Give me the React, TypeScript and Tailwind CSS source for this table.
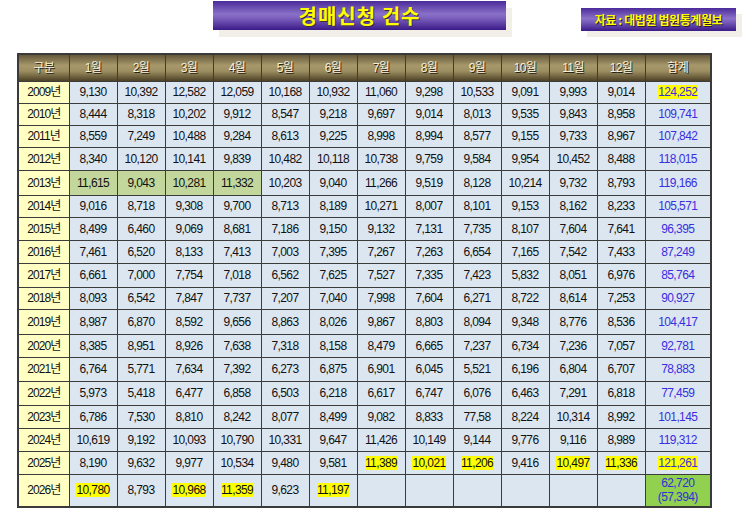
import React from 'react';

type Row = {
  year: string;
  h: string;
  vals: (string | null)[];
  total: string;
  hl?: number[];
  green?: number[];
  totalHl?: boolean;
};

const rows: Row[] = [
  { year: '2009', h: 'h-[22px]', vals: ['9,130', '10,392', '12,582', '12,059', '10,168', '10,932', '11,060', '9,298', '10,533', '9,091', '9,993', '9,014'], total: '124,252', totalHl: true },
  { year: '2010', h: 'h-[22px]', vals: ['8,444', '8,318', '10,202', '9,912', '8,547', '9,218', '9,697', '9,014', '8,013', '9,535', '9,843', '8,958'], total: '109,741' },
  { year: '2011', h: 'h-[22px]', vals: ['8,559', '7,249', '10,488', '9,284', '8,613', '9,225', '8,998', '8,994', '8,577', '9,155', '9,733', '8,967'], total: '107,842' },
  { year: '2012', h: 'h-[23px]', vals: ['8,340', '10,120', '10,141', '9,839', '10,482', '10,118', '10,738', '9,759', '9,584', '9,954', '10,452', '8,488'], total: '118,015' },
  { year: '2013', h: 'h-[25px]', vals: ['11,615', '9,043', '10,281', '11,332', '10,203', '9,040', '11,266', '9,519', '8,128', '10,214', '9,732', '8,793'], total: '119,166', green: [0, 1, 2, 3] },
  { year: '2014', h: 'h-[22px]', vals: ['9,016', '8,718', '9,308', '9,700', '8,713', '8,189', '10,271', '8,007', '8,101', '9,153', '8,162', '8,233'], total: '105,571' },
  { year: '2015', h: 'h-[23px]', vals: ['8,499', '6,460', '9,069', '8,681', '7,186', '9,150', '9,132', '7,131', '7,735', '8,107', '7,604', '7,641'], total: '96,395' },
  { year: '2016', h: 'h-[23px]', vals: ['7,461', '6,520', '8,133', '7,413', '7,003', '7,395', '7,267', '7,263', '6,654', '7,165', '7,542', '7,433'], total: '87,249' },
  { year: '2017', h: 'h-[24px]', vals: ['6,661', '7,000', '7,754', '7,018', '6,562', '7,625', '7,527', '7,335', '7,423', '5,832', '8,051', '6,976'], total: '85,764' },
  { year: '2018', h: 'h-[22px]', vals: ['8,093', '6,542', '7,847', '7,737', '7,207', '7,040', '7,998', '7,604', '6,271', '8,722', '8,614', '7,253'], total: '90,927' },
  { year: '2019', h: 'h-[25px]', vals: ['8,987', '6,870', '8,592', '9,656', '8,863', '8,026', '9,867', '8,803', '8,094', '9,348', '8,776', '8,536'], total: '104,417' },
  { year: '2020', h: 'h-[23px]', vals: ['8,385', '8,951', '8,926', '7,638', '7,318', '8,158', '8,479', '6,665', '7,237', '6,734', '7,236', '7,057'], total: '92,781' },
  { year: '2021', h: 'h-[24px]', vals: ['6,764', '5,771', '7,634', '7,392', '6,273', '6,875', '6,901', '6,045', '5,521', '6,196', '6,804', '6,707'], total: '78,883' },
  { year: '2022', h: 'h-[24px]', vals: ['5,973', '5,418', '6,477', '6,858', '6,503', '6,218', '6,617', '6,747', '6,076', '6,463', '7,291', '6,818'], total: '77,459' },
  { year: '2023', h: 'h-[23px]', vals: ['6,786', '7,530', '8,810', '8,242', '8,077', '8,499', '9,082', '8,833', '77,58', '8,224', '10,314', '8,992'], total: '101,145' },
  { year: '2024', h: 'h-[23px]', vals: ['10,619', '9,192', '10,093', '10,790', '10,331', '9,647', '11,426', '10,149', '9,144', '9,776', '9,116', '8,989'], total: '119,312' },
  { year: '2025', h: 'h-[23px]', vals: ['8,190', '9,632', '9,977', '10,534', '9,480', '9,581', '11,389', '10,021', '11,206', '9,416', '10,497', '11,336'], total: '121,261', hl: [6, 7, 8, 10, 11], totalHl: true },
  { year: '2026', h: 'h-[33px]', vals: ['10,780', '8,793', '10,968', '11,359', '9,623', '11,197', null, null, null, null, null, null], total: '', hl: [0, 2, 3, 5] },
];

const months = ['1월', '2월', '3월', '4월', '5월', '6월', '7월', '8월', '9월', '10월', '11월', '12월'];

const headCls =
  'border border-[#3c3c3c] bg-[linear-gradient(to_bottom,#65583a,#a6986a_40%,#9c8e60_62%,#4c4026)] text-[#f6f0dc] font-normal [text-shadow:1px_1px_0_#2a2415]';
const cellCls = 'border border-[#3c3c3c] text-center p-0';

export default function App() {
  return (
    <div
      className="w-[743px] h-[516px] bg-white overflow-hidden"
      style={{ fontFamily: '"Liberation Sans", "Noto Sans CJK KR", sans-serif' }}
    >
      {/* Title row */}
      <div className="flex items-start">
        <div className="ml-[213px] mt-[1px] w-[293px] h-[29px] flex items-center justify-center bg-[linear-gradient(to_bottom,#4a2a9a,#8a70c8_45%,#7a5ebc_60%,#3a1a88)] shadow-[6px_7px_0_#f1efe7]">
          <span
            className="text-[20px] font-bold text-[#ffff00] tracking-[1px] [text-shadow:1px_1px_0_#3a2a40]"
            style={{ fontFamily: '"Noto Sans CJK KR", sans-serif' }}
          >
            경매신청 건수
          </span>
        </div>
        <div className="ml-[75px] mt-[8px] w-[155px] h-[23px] flex items-center justify-center bg-[linear-gradient(to_bottom,#4a2a9a,#8a70c8_45%,#7a5ebc_60%,#3a1a88)] shadow-[6px_6px_0_#f1efe7]">
          <span
            className="text-[12px] font-bold text-[#ffff00] tracking-[-0.4px] [text-shadow:1px_1px_0_#2a1a40]"
            style={{ fontFamily: '"Noto Sans CJK KR", sans-serif' }}
          >
            자료 : 대법원 법원통계월보
          </span>
        </div>
      </div>

      {/* Table */}
      <table className="ml-[17px] mt-[22px] table-fixed border-collapse border-2 border-[#3a3a3a] text-[12px] tracking-[-0.6px] text-[#111]">
        <colgroup>
          <col className="w-[51px]" />
          {months.map((m) => (
            <col key={m} className="w-[48px]" />
          ))}
          <col className="w-[66px]" />
        </colgroup>
        <thead>
          <tr className="h-[27px]">
            <th className={headCls}>구분</th>
            {months.map((m) => (
              <th key={m} className={headCls}>
                {m}
              </th>
            ))}
            <th className={headCls}>합계</th>
          </tr>
        </thead>
        <tbody>
          {rows.map((r) => (
            <tr key={r.year} className={r.h}>
              <td className={`${cellCls} bg-[#ffffc4] tracking-[-0.9px]`}>{r.year}년</td>
              {r.vals.map((v, i) => {
                const isGreen = r.green?.includes(i);
                const isHl = r.hl?.includes(i);
                return (
                  <td key={i} className={`${cellCls} ${isGreen ? 'bg-[#c3d69b]' : 'bg-[#dce6f1]'}`}>
                    {v && (isHl ? <span className="bg-[#ffff00]">{v}</span> : v)}
                  </td>
                );
              })}
              {r.year === '2026' ? (
                <td className={`${cellCls} bg-[#92d050] text-[#2f2fd8] leading-[14px]`}>
                  <div>62,720</div>
                  <div>(57,394)</div>
                </td>
              ) : (
                <td className={`${cellCls} bg-[#dce6f1] text-[#3a2ee0]`}>
                  {r.totalHl ? <span className="bg-[#ffff00]">{r.total}</span> : r.total}
                </td>
              )}
            </tr>
          ))}
        </tbody>
      </table>
    </div>
  );
}
